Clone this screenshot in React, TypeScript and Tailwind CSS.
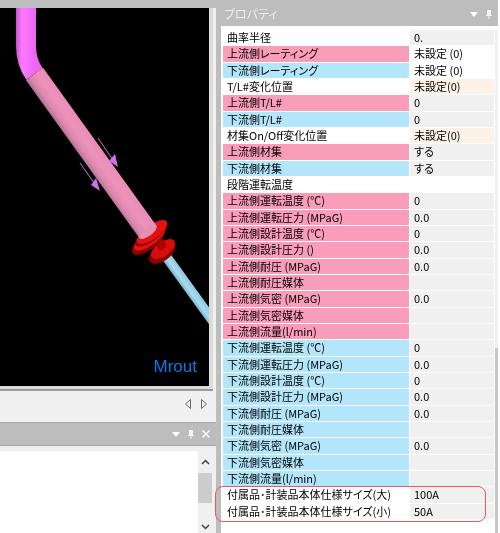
const jp = '"Noto Sans CJK JP", "Liberation Sans", sans-serif';

type Row = { label: string; value?: string; tone: 'white' | 'pink' | 'blue'; valueTone?: 'gray' | 'white' | 'cream' };

const rows: Row[] = [
  { label: '曲率半径', value: '0.', tone: 'white' },
  { label: '上流側レーティング', value: '未設定 (0)', tone: 'pink', valueTone: 'white' },
  { label: '下流側レーティング', value: '未設定 (0)', tone: 'blue', valueTone: 'white' },
  { label: 'T/L#変化位置', value: '未設定(0)', tone: 'white', valueTone: 'cream' },
  { label: '上流側T/L#', value: '0', tone: 'pink' },
  { label: '下流側T/L#', value: '0', tone: 'blue' },
  { label: '材集On/Off変化位置', value: '未設定(0)', tone: 'white', valueTone: 'cream' },
  { label: '上流側材集', value: 'する', tone: 'pink' },
  { label: '下流側材集', value: 'する', tone: 'blue' },
  { label: '段階運転温度', tone: 'white', valueTone: 'white' },
  { label: '上流側運転温度 (℃)', value: '0', tone: 'pink' },
  { label: '上流側運転圧力 (MPaG)', value: '0.0', tone: 'pink' },
  { label: '上流側設計温度 (℃)', value: '0', tone: 'pink' },
  { label: '上流側設計圧力 ()', value: '0.0', tone: 'pink' },
  { label: '上流側耐圧 (MPaG)', value: '0.0', tone: 'pink' },
  { label: '上流側耐圧媒体', tone: 'pink' },
  { label: '上流側気密 (MPaG)', value: '0.0', tone: 'pink' },
  { label: '上流側気密媒体', tone: 'pink' },
  { label: '上流側流量(l/min)', tone: 'pink' },
  { label: '下流側運転温度 (℃)', value: '0', tone: 'blue' },
  { label: '下流側運転圧力 (MPaG)', value: '0.0', tone: 'blue' },
  { label: '下流側設計温度 (℃)', value: '0', tone: 'blue' },
  { label: '下流側設計圧力 (MPaG)', value: '0.0', tone: 'blue' },
  { label: '下流側耐圧 (MPaG)', value: '0.0', tone: 'blue' },
  { label: '下流側耐圧媒体', tone: 'blue' },
  { label: '下流側気密 (MPaG)', value: '0.0', tone: 'blue' },
  { label: '下流側気密媒体', tone: 'blue' },
  { label: '下流側流量(l/min)', tone: 'blue' },
  { label: '付属品･計装品本体仕様サイズ(大)', value: '100A', tone: 'white' },
  { label: '付属品･計装品本体仕様サイズ(小)', value: '50A', tone: 'white' },
];

function PipeView() {
  return (
    <svg viewBox="0 0 209 378" className="h-full w-full" fill="none">
      <defs>
        <linearGradient id="top" x1="16" x2="36" y1="0" y2="0" gradientUnits="userSpaceOnUse">
          <stop offset="0" stopColor="#c454cc" />
          <stop offset="0.3" stopColor="#ff78ff" />
          <stop offset="1" stopColor="#ea66f0" />
        </linearGradient>
        <linearGradient id="body" x1="26" y1="72" x2="43" y2="60" gradientUnits="userSpaceOnUse">
          <stop offset="0" stopColor="#b07090" />
          <stop offset="0.25" stopColor="#dc88ae" />
          <stop offset="0.6" stopColor="#ee92ba" />
          <stop offset="1" stopColor="#e88eb6" />
        </linearGradient>
        <linearGradient id="cold" x1="172" y1="265" x2="179" y2="260" gradientUnits="userSpaceOnUse">
          <stop offset="0" stopColor="#7cb4ca" />
          <stop offset="0.5" stopColor="#a8dcf0" />
          <stop offset="1" stopColor="#94cce2" />
        </linearGradient>
      </defs>
      <path d="M26 0 V38 Q26 54 34.500 66" stroke="url(#top)" strokeWidth="20" />
      <path d="M160 240 L215 316" stroke="url(#cold)" strokeWidth="10" />
      {/* flange pair */}
      <ellipse cx="162" cy="245" rx="15" ry="8" fill="#8c0000" transform="rotate(-36 162 245)" />
      <ellipse cx="163" cy="241" rx="14" ry="7" fill="#d80c0c" transform="rotate(-36 163 241)" />
      <path d="M151 229 L160 243 L167 238 L158 224 Z" fill="#b00000" />
      <ellipse cx="148" cy="234" rx="19" ry="8" fill="#8c0000" transform="rotate(-36 148 234)" />
      <ellipse cx="150" cy="230" rx="19" ry="7" fill="#e01212" transform="rotate(-36 150 230)" />
      <ellipse cx="151" cy="226" rx="19" ry="7" fill="#a00000" transform="rotate(-36 151 226)" />
      <ellipse cx="152" cy="224" rx="18" ry="7" fill="#e01212" transform="rotate(-36 152 224)" />
      <path d="M34.500 66 L148 224" stroke="url(#body)" strokeWidth="21" />
      <ellipse cx="148" cy="224" rx="10.500" ry="4" fill="#e88eb6" transform="rotate(-36 148 224)" />
      <path d="M98 130 L115 155" stroke="#d070e8" strokeWidth="1" />
      <path d="M118 159 L109 153 L115 146 Z" fill="#d070e8" />
      <path d="M80 155 L97 179" stroke="#d070e8" strokeWidth="1" />
      <path d="M100 183 L91 177 L96 170 Z" fill="#d070e8" />
    </svg>
  );
}

function PanelButtons({ close }: { close?: boolean }) {
  return (
    <div className="flex items-center gap-[8px]">
      <svg width="8" height="5" viewBox="0 0 8 5"><path d="M0 0H8L4 5Z" fill="#fff" /></svg>
      <svg width="6" height="9" viewBox="0 0 6 9"><path d="M1 0H5V5H6V6H3.500V9H2.500V6H0V5H1Z" fill="#f4f4f4" /></svg>
      {close && (
        <svg width="8" height="8" viewBox="0 0 8 8"><path d="M.5 .5L7.500 7.500M7.500 .5L.5 7.500" stroke="#fff" strokeWidth="1.300" /></svg>
      )}
    </div>
  );
}

export default function App() {
  return (
    <div className="relative flex h-[533px] w-[500px] overflow-hidden bg-white text-black blur-[0.35px] [font-feature-settings:'palt']" style={{ fontFamily: jp }}>
      <div className="flex w-[216px] shrink-0 flex-col bg-[#f0f0f0]">
        <div className="h-[8px] shrink-0 bg-[#bdbdbd]" />
        <div className="relative h-[378px] w-[213px] shrink-0 border-r-4 border-[#dcdcdc] bg-black">
          <PipeView />
          <span className="absolute bottom-[11px] right-[12px] text-[17px] leading-none text-[#0a78e6]" style={{ fontFamily: '"Liberation Sans", sans-serif' }}>Mrout</span>
        </div>
        <div className="h-[5px] w-[213px] shrink-0 border-b-2 border-[#9a9a9a] bg-[#dcdcdc]" />
        <div className="flex h-[26px] w-[213px] shrink-0 items-center justify-end gap-[10px] pr-[6px]">
          <svg width="6" height="10" viewBox="0 0 6 10"><path d="M5.500 .5V9.500L.5 5Z" fill="#f0f0f0" stroke="#666" /></svg>
          <svg width="6" height="10" viewBox="0 0 6 10"><path d="M.5 .5V9.500L5.500 5Z" fill="#f0f0f0" stroke="#666" /></svg>
        </div>
        <div className="mt-[5px] flex h-[24px] shrink-0 items-center justify-end border-y border-[#a8a8a8] bg-[#bdbdbd] pr-[6px]">
          <PanelButtons close />
        </div>
        <div className="mt-[5px] flex min-h-0 w-[212px] flex-1 bg-white">
          <div className="flex-1" />
          <div className="flex w-[14px] flex-col items-center bg-[#f0f0f0]">
            <svg className="my-[8px]" width="9" height="6" viewBox="0 0 9 6"><path d="M1 5L4.500 1.500L8 5" stroke="#444" strokeWidth="1.500" fill="none" /></svg>
            <div className="h-[30px] w-full bg-[#cdcdcd]" />
            <div className="flex-1" />
            <svg className="my-[3px]" width="9" height="6" viewBox="0 0 9 6"><path d="M1 1L4.500 4.500L8 1" stroke="#444" strokeWidth="1.500" fill="none" /></svg>
          </div>
        </div>
      </div>

      <div className="flex w-[282px] shrink-0 flex-col bg-[#bdbdbd]">
        <div className="flex h-[26px] shrink-0 items-center justify-between pl-[8px] pr-[6px] pt-[2px]">
          <span className="text-[12px] leading-none text-[#eeeeee]">プロパティ</span>
          <PanelButtons />
        </div>
        <div className="ml-[5px] flex min-h-0 flex-1 bg-white pt-[4px] pl-[2px]">
          <div className="grid h-[490px] w-[271px] grid-cols-[186px_1fr] grid-rows-[repeat(30,16.33px)]">
            {rows.map((r) => (
              <div key={r.label} className="contents">
                <div className={`mb-px flex items-center whitespace-nowrap pl-[4px] text-[11px] leading-none ${r.tone === 'pink' ? 'bg-[#fa9dbb]' : r.tone === 'blue' ? 'bg-[#b3e5fb]' : 'bg-white'}`}>
                  {r.label}
                </div>
                <div className={`mb-px ml-px flex items-center pl-[4px] text-[11px] leading-none ${r.valueTone === 'white' ? 'bg-white' : r.valueTone === 'cream' ? 'bg-[#fdf2e8]' : 'bg-[#f0f0f0]'}`}>
                  {r.value}
                </div>
              </div>
            ))}
          </div>
          <div className="ml-[1px] flex w-[3px] flex-col bg-[#f0f0f0]">
            <div className="h-[318px]" />
            <div className="flex-1 bg-[#c8c8c8]" />
          </div>
        </div>
      </div>

      <div className="absolute left-[215px] top-[486px] h-[36px] w-[271px] rounded-[8px] border border-[#e85a5a]" />
    </div>
  );
}
